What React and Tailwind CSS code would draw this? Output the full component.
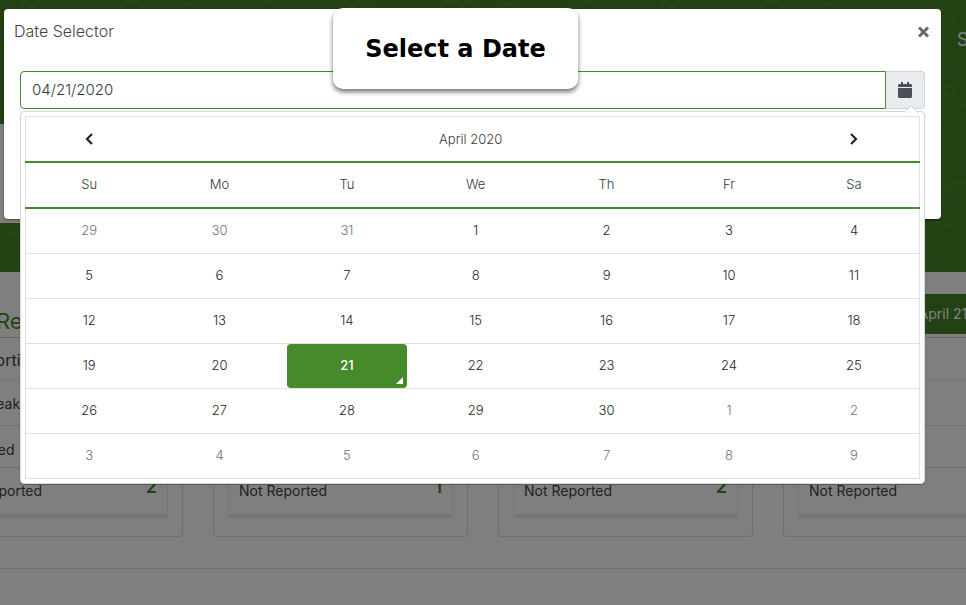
import React, { useState } from "react";

const weekdays = ["Su", "Mo", "Tu", "We", "Th", "Fr", "Sa"];

const weeks = [
  [29, 30, 31, 1, 2, 3, 4],
  [5, 6, 7, 8, 9, 10, 11],
  [12, 13, 14, 15, 16, 17, 18],
  [19, 20, 21, 22, 23, 24, 25],
  [26, 27, 28, 29, 30, 1, 2],
  [3, 4, 5, 6, 7, 8, 9],
];

const cards = [
  { id: "a", title: "Not Reporting", rows: ["Tea Break", "Reported"], count: 2 },
  { id: "b", rows: ["", ""], count: 1 },
  { id: "c", rows: ["", ""], count: 2 },
  { id: "d", rows: ["", ""] },
];

function isOutside(week, day) {
  return (week === 0 && day > 20) || (week > 3 && day < 15);
}

function HeroPattern() {
  return (
    <svg
      className="absolute inset-0 h-full w-full"
      fill="none"
      stroke="#5c9640"
      strokeOpacity="0.35"
      strokeWidth="2"
      aria-hidden="true"
    >
      <defs>
        <pattern id="food" width="320" height="272" patternUnits="userSpaceOnUse">
          <circle cx="32" cy="0" r="7" />
          <path d="M22 8C24-8 46-12 52 8M120 8c4-10 18-10 24 0M142 8c0-8 10-8 12-2M258 8c10-8 20-12 34-8M180 2c6 4 12 4 18 0" />
          <path d="M0 244c8-14 20-14 24 0s-10 30-20 26M2 232c8 4 14 0 20-4" />
        </pattern>
      </defs>
      <rect width="92%" height="100%" fill="url(#food)" stroke="none" />
      <svg x="100%" overflow="visible">
        <path d="M-38 4c6 8 28 4 26 14s-14 12-18 4M-20 76c-6-10 2-8 4-12 4 4 12 8 4 12-3 2-6 2-8 0M-21 86h9v9h-9zM0 106c-12-4-24 8-26 22M-25 174c8 0 20-4 25-12M-30 220l4 6h10v-8M-22 240c4-8 14-6 22-4M-34 262c4-14 12-4 14 6" />
        <circle cx="-6" cy="198" r="16" />
        <circle cx="-8" cy="196" r="10" strokeDasharray="3 3" />
      </svg>
    </svg>
  );
}

function ReportCard({ title, rows, count }) {
  return (
    <article className="w-[255px] shrink-0 rounded-b border-x border-b border-[#dfdfdf] px-[14px] pb-[18px]">
      <h3 className="-mx-2 h-[41px] text-base leading-[44px]">{title}</h3>
      <div className="rounded border border-b-4 border-[#ebebeb]">
        <p className="h-[46px] border-b border-[#dfdfdf] px-[10px] text-sm leading-[48px]">{rows[0]}</p>
        <p className="h-[42px] border-b border-[#dfdfdf] px-[10px] text-sm leading-[48px]">{rows[1]}</p>
        <div className="flex h-[46px] justify-between px-[10px]">
          <span className="text-sm leading-[46px]">Not Reported</span>
          <strong className="text-lg leading-[38px] font-semibold text-[#478a2b]">{count}</strong>
        </div>
      </div>
    </article>
  );
}

function Dashboard() {
  return (
    <div className="min-h-screen bg-white text-[#444]" aria-hidden="true">
      <header className="relative h-[272px] bg-[#478427] text-white">
        <HeroPattern />
        <div className="relative flex h-[124px] justify-end pt-7">
          <span className="w-[9px] text-lg leading-6 whitespace-nowrap">Sign out</span>
        </div>
        <div className="relative h-[99px] w-4/5 bg-white" />
      </header>
      <div className="mt-[22px] flex h-[44px] justify-between border-b border-[#c3d5ba]">
        <h2 className="-ml-1 pt-3 text-[22px] leading-[30px] text-[#478a2b]">Report</h2>
        <span className="-mr-[60px] h-10 bg-[#478427] px-4 text-sm leading-10 whitespace-nowrap text-white">
          April 21, 2020
        </span>
      </div>
      <div className="-ml-[72px] flex gap-[30px]">
        {cards.map(({ id, ...card }) => (
          <ReportCard key={id} {...card} />
        ))}
      </div>
      <hr className="mt-[31px] border-[#dfdfdf]" />
    </div>
  );
}

function Chevron({ d }) {
  return (
    <svg width="10" height="14" viewBox="0 0 10 14" fill="none" stroke="#212529" strokeWidth="2.2" className="mx-auto">
      <path d={d} />
    </svg>
  );
}

function Calendar({ selected, onSelect }) {
  return (
    <div className="absolute inset-x-0 top-full mt-[2px] rounded border border-[#d5d9dd] bg-white p-1 shadow-[0_1px_1px_rgba(0,0,0,0.3)]">
      <svg className="absolute -top-[7px] right-[6px]" width="14" height="8" viewBox="0 0 14 8">
        <path d="M0 7.5 7 1l7 6.5" fill="#fff" stroke="#ced4da" />
      </svg>
      <table className="w-full table-fixed border-collapse border border-[#dee2e6] text-center text-[13px] leading-5 font-light text-[#343a40]">
        <colgroup>
          <col className="w-[14.2%]" />
          <col className="w-[15%]" />
          <col className="w-[13.5%]" />
          <col className="w-[15.3%]" />
          <col className="w-[14%]" />
          <col className="w-[13.4%]" />
          <col className="w-[14.6%]" />
        </colgroup>
        <thead>
          <tr className="h-[45px] border-b-2 border-[#478a2b]">
            <th className="p-0">
              <button type="button" aria-label="Previous month" className="block w-full">
                <Chevron d="M8 2 3 7l5 5" />
              </button>
            </th>
            <th colSpan={5} className="p-0 font-light">April 2020</th>
            <th className="p-0">
              <button type="button" aria-label="Next month" className="block w-full">
                <Chevron d="m2 2 5 5-5 5" />
              </button>
            </th>
          </tr>
          <tr className="h-[46px] border-b-2 border-[#478a2b]">
            {weekdays.map((name) => (
              <th key={name} className="p-0 pb-px font-light">{name}</th>
            ))}
          </tr>
        </thead>
        <tbody>
          {weeks.map((week, w) => (
            <tr key={w} className="h-[45px] border-t border-[#dee2e6] first:border-t-2 first:border-t-[#478a2b]">
              {week.map((day) => {
                const outside = isOutside(w, day);
                const active = !outside && day === selected;
                return (
                  <td key={day} className="p-0">
                    <button
                      type="button"
                      onClick={() => onSelect(day)}
                      className={
                        active
                          ? "relative block h-11 w-full rounded bg-[#478a2b] pb-[2px] font-medium text-white"
                          : outside
                            ? "block h-11 w-full pb-[2px] text-[#6c757d]"
                            : "block h-11 w-full pb-[2px] text-[#212529]"
                      }
                    >
                      {day}
                      {active && (
                        <svg className="absolute right-1 bottom-1" width="7" height="7" viewBox="0 0 7 7">
                          <path d="M7 0v7H0z" fill="#fff" />
                        </svg>
                      )}
                    </button>
                  </td>
                );
              })}
            </tr>
          ))}
        </tbody>
      </table>
    </div>
  );
}

export default function App() {
  const [selected, setSelected] = useState(21);
  const value = "04/" + String(selected).padStart(2, "0") + "/2020";

  return (
    <div className="relative h-screen overflow-hidden font-['Inter','Liberation_Sans',sans-serif]">
      <Dashboard />
      <div className="absolute inset-0 bg-black/50" />
      <div className="absolute inset-x-0 top-0 pt-[9px] pr-[25px] pl-1">
        <section
          role="dialog"
          aria-labelledby="dialog-title"
          className="h-[210px] rounded bg-white shadow-[0_1px_2px_rgba(0,0,0,0.5)]"
        >
          <div className="flex h-[62px] items-start justify-between px-[10px] pt-[10px]">
            <h1 id="dialog-title" className="text-base leading-6 font-light text-[#444]">Date Selector</h1>
            <button type="button" aria-label="Close" className="p-[2px] pt-[7px]">
              <svg width="11" height="12" viewBox="0 0 11 12" stroke="#666" strokeWidth="3">
                <path d="m1 1.5 9 9m0-9-9 9" />
              </svg>
            </button>
          </div>
          <div className="relative mx-4">
            <div className="flex h-[38px]">
              <input
                aria-label="Date"
                readOnly
                value={value}
                className="min-w-0 flex-1 rounded-l border border-[#478a2b] bg-white px-[11px] text-[15px] font-light text-[#343a40] outline-none"
              />
              <button
                type="button"
                aria-label="Open calendar"
                className="flex w-[39px] items-center justify-center rounded-r border border-l-0 border-[#ced4da] bg-[#e9ecef]"
              >
                <svg width="14" height="16" viewBox="0 0 448 512" fill="#495057">
                  <path d="M0 464c0 26.500 21.500 48 48 48h352c26.500 0 48-21.500 48-48V192H0zM448 160v-48c0-26.500-21.500-48-48-48h-48V12c0-6.600-5.400-12-12-12h-40c-6.600 0-12 5.400-12 12v52H160V12c0-6.600-5.400-12-12-12h-40c-6.600 0-12 5.400-12 12v52H48C21.500 64 0 85.500 0 112v48z" />
                </svg>
              </button>
            </div>
            <Calendar selected={selected} onSelect={setSelected} />
          </div>
        </section>
      </div>
      <div className="absolute top-2 left-[333px] flex h-[81px] w-[245px] items-center justify-center rounded-[10px] bg-white font-['DejaVu_Sans',sans-serif] text-2xl font-bold text-black shadow-[0_3px_5px_rgba(0,0,0,0.55)]">
        Select a Date
      </div>
    </div>
  );
}
